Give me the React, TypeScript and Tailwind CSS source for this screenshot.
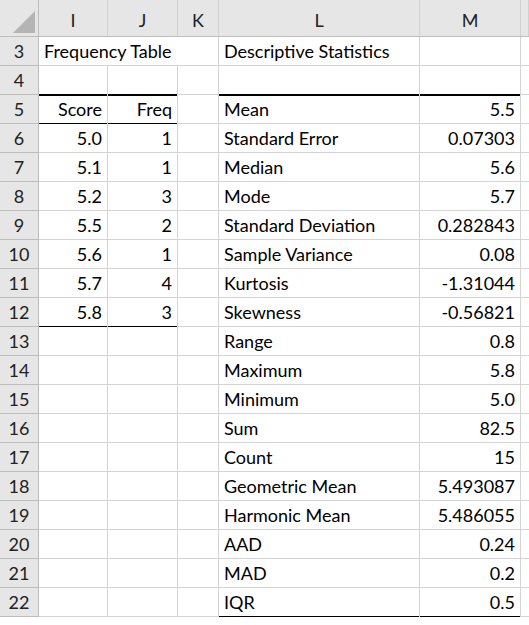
const cols = ["I", "J", "K", "L", "M", ""];
const widths = ["w-[69px]", "w-[70px]", "w-[41px]", "w-[201px]", "w-[101px]", "w-[8px]"];

const freq: [string, string][] = [
  ["5.0", "1"], ["5.1", "1"], ["5.2", "3"], ["5.5", "2"], ["5.6", "1"], ["5.7", "4"], ["5.8", "3"],
];
const stats: [string, string][] = [
  ["Mean", "5.5"], ["Standard Error", "0.07303"], ["Median", "5.6"], ["Mode", "5.7"],
  ["Standard Deviation", "0.282843"], ["Sample Variance", "0.08"], ["Kurtosis", "-1.31044"],
  ["Skewness", "-0.56821"], ["Range", "0.8"], ["Maximum", "5.8"], ["Minimum", "5.0"],
  ["Sum", "82.5"], ["Count", "15"], ["Geometric Mean", "5.493087"], ["Harmonic Mean", "5.486055"],
  ["AAD", "0.24"], ["MAD", "0.2"], ["IQR", "0.5"],
];

type Cell = { t?: string; right?: boolean; top?: boolean; bottom?: boolean; overflow?: boolean };

function row(r: number): Cell[] {
  const c: Cell[] = [{}, {}, {}, {}, {}, {}];
  if (r === 3) {
    c[0] = { t: "Frequency Table", overflow: true };
    c[3] = { t: "Descriptive Statistics" };
  }
  if (r === 5) {
    c[0] = { t: "Score", right: true, top: true, bottom: true };
    c[1] = { t: "Freq", right: true, top: true, bottom: true };
  }
  if (r >= 6 && r <= 12) {
    const f = freq[r - 6];
    c[0] = { t: f[0], right: true, bottom: r === 12 };
    c[1] = { t: f[1], right: true, bottom: r === 12 };
  }
  if (r >= 5) {
    const s = stats[r - 5];
    c[3] = { t: s[0], top: r === 5, bottom: r === 22 };
    c[4] = { t: s[1], right: true, top: r === 5, bottom: r === 22 };
  }
  return c;
}

export default function App() {
  const rows = Array.from({ length: 20 }, (_, i) => i + 3);
  return (
    <div className="w-[529px] h-[625px] overflow-hidden bg-white text-[18px] text-black" style={{ fontFamily: "Lato, 'Noto Sans', sans-serif" }}>
      <div className="flex h-[37px] bg-[#e6e6e6] border-b border-[#bdbdbd]">
        <div className="w-[39px] shrink-0 border-r border-[#bdbdbd] relative">
          <svg className="absolute right-[3px] bottom-[3px]" width="22" height="22" viewBox="0 0 22 22">
            <polygon points="22,0 22,22 0,22" fill="#b4b4b4" />
          </svg>
        </div>
        {cols.map((c, i) => (
          <div key={i} className={`${widths[i]} shrink-0 border-r border-[#d0d0d0] flex items-end justify-center pb-[2px] text-[#222]`}>
            {c}
          </div>
        ))}
      </div>
      {rows.map((r) => (
        <div key={r} className="flex h-[29px]">
          <div className="w-[39px] shrink-0 bg-[#e6e6e6] border-r border-b border-[#bdbdbd] flex items-center justify-center text-[#222]">
            {r}
          </div>
          {row(r).map((cell, i) => (
            <div
              key={i}
              className={`${widths[i]} shrink-0 relative border-b ${cell.overflow ? "" : "border-r"} border-[#d4d4d4] flex items-center px-[5px] whitespace-nowrap ${cell.right ? "justify-end" : ""} ${i === 1 && r === 3 ? "border-r-0" : ""}`}
            >
              {cell.top && <div className="absolute left-0 right-0 -top-[1px] h-[1.5px] bg-black" />}
              {cell.bottom && <div className="absolute left-0 right-0 -bottom-[1px] h-[1.5px] bg-black" />}
              <span className={cell.overflow ? "absolute left-[5px] z-10" : ""}>{cell.t}</span>
            </div>
          ))}
        </div>
      ))}
    </div>
  );
}
